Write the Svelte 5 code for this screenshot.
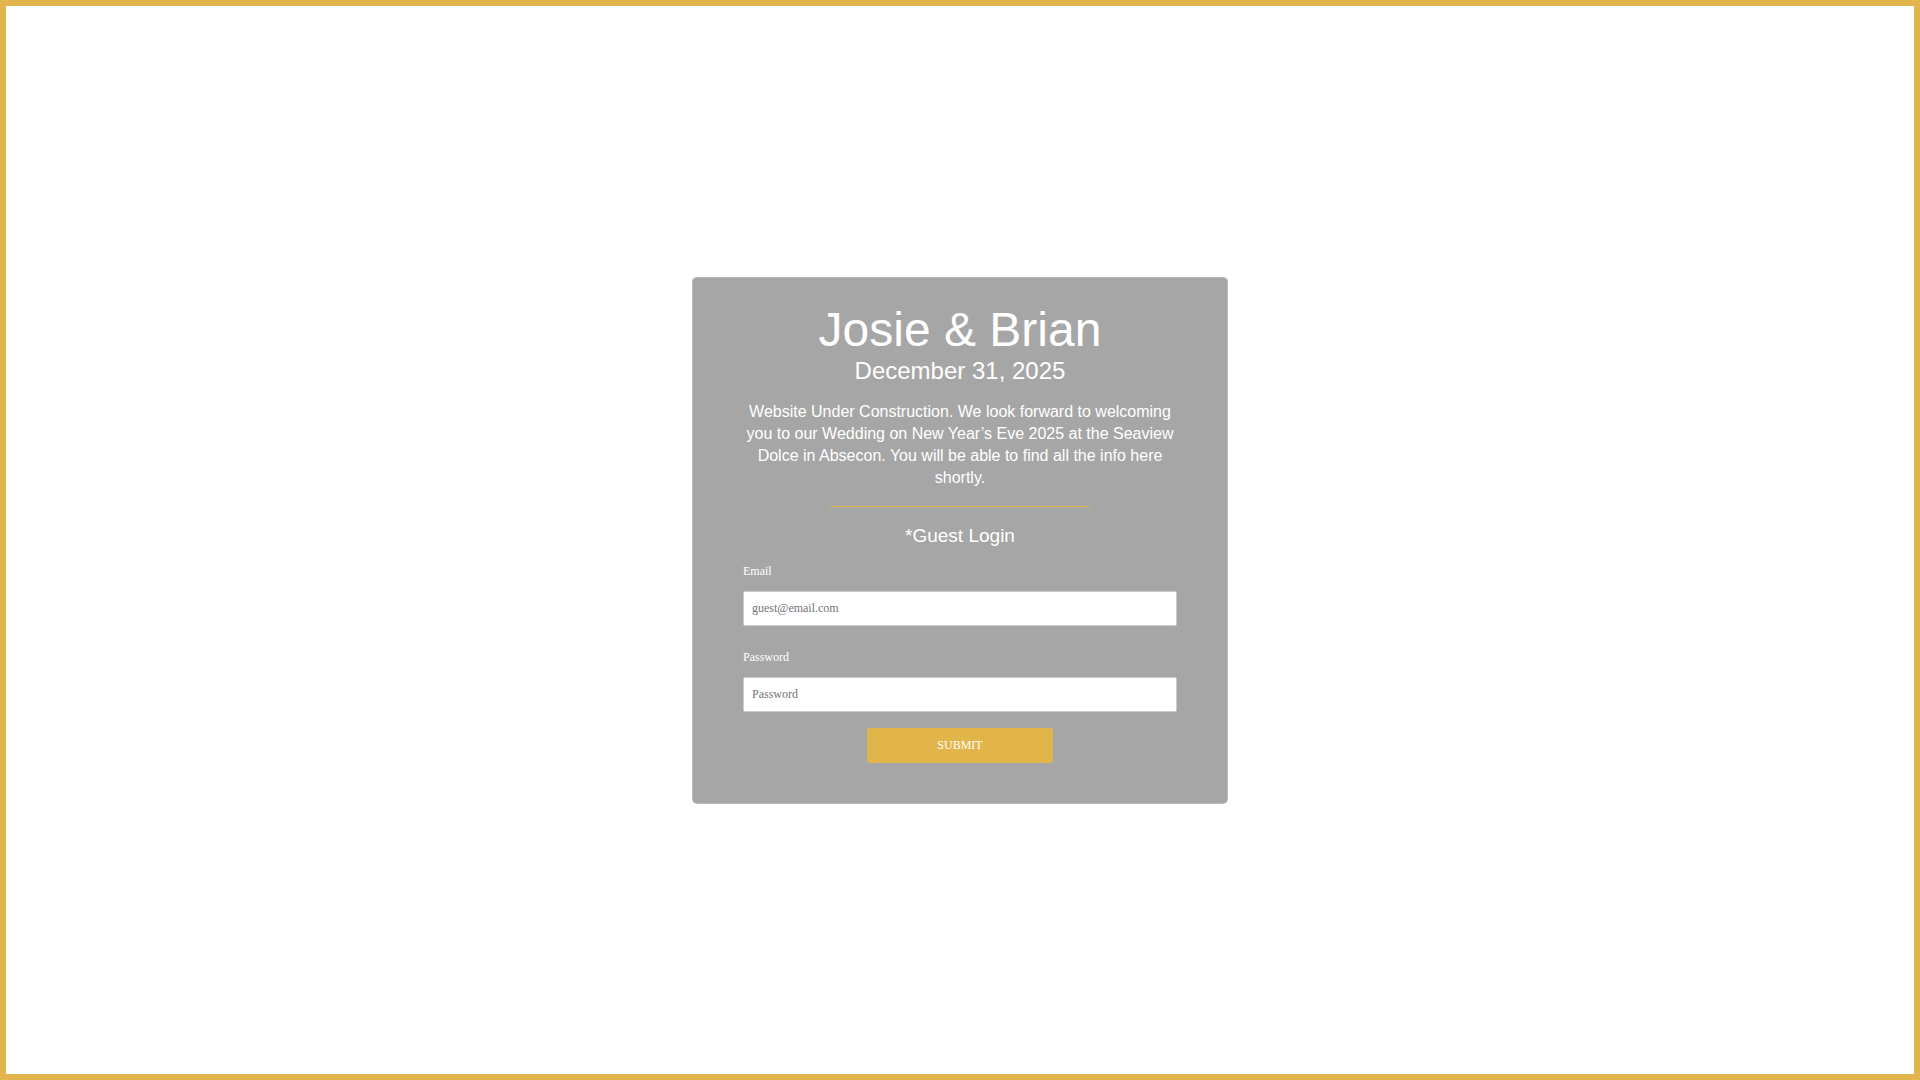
<script>
  let email = $state('')
  let password = $state('')

  function submit(event) {
    event.preventDefault()
  }
</script>

<main class="page">
  <section class="card">
    <h1>Josie &amp; Brian</h1>
    <h2>December 31, 2025</h2>
    <p class="intro">
      Website Under Construction. We look forward to welcoming you to our Wedding on New Year’s Eve 2025 at the Seaview Dolce in Absecon. You will be able to find all the info here shortly.
    </p>
    <hr />
    <h3>*Guest Login</h3>
    <form onsubmit={submit}>
      <div class="field">
        <label for="email">Email</label>
        <input id="email" type="email" placeholder="guest@email.com" bind:value={email} />
      </div>
      <div class="field">
        <label for="password">Password</label>
        <input id="password" type="password" placeholder="Password" bind:value={password} />
      </div>
      <button type="submit">SUBMIT</button>
    </form>
  </section>
</main>

<style>
  .page {
    box-sizing: border-box;
    min-height: 100vh;
    display: flex;
    align-items: center;
    justify-content: center;
    border: 6px solid #e2b54a;
    background: #fff;
    color: #fff;
    font-family: "Liberation Sans", Arial, sans-serif;
    text-align: center;
  }

  .card {
    box-sizing: border-box;
    width: 100%;
    max-width: 536px;
    padding: 25px 50px 40px;
    border: 1px solid rgba(204, 204, 204, 0.5);
    border-radius: 5px;
    background: rgba(0, 0, 0, 0.35);
  }

  h1,
  h2,
  h3 {
    margin: 0;
    font-weight: 400;
  }

  h1 {
    font-size: 48px;
    line-height: 54px;
  }

  h2 {
    font-size: 24px;
    line-height: 28px;
  }

  h3 {
    font-size: 19px;
    line-height: 24px;
  }

  .intro {
    margin: 16px 0;
    font-size: 16px;
    line-height: 22px;
  }

  hr {
    width: 60%;
    height: 1px;
    margin: 17px auto;
    border: 0;
    background: #e2b54a;
  }

  form {
    display: flex;
    flex-direction: column;
    align-items: center;
    gap: 16px;
    margin-top: 16px;
    font-family: "Liberation Serif", "Times New Roman", serif;
    font-size: 12px;
  }

  .field {
    width: 100%;
    display: flex;
    flex-direction: column;
    gap: 12px;
    text-align: left;
  }

  .field + .field {
    margin-top: 8px;
  }

  label {
    line-height: 15px;
  }

  input {
    box-sizing: border-box;
    width: 100%;
    height: 35px;
    padding: 0 8px;
    border: 1px solid #ccc;
    border-radius: 2px;
    background: #fff;
    color: #333;
    font: inherit;
  }

  input::placeholder {
    color: #757575;
  }

  button {
    width: 186px;
    height: 35px;
    padding: 0;
    border: 0;
    border-radius: 3px;
    background: #e2b54a;
    color: #fff;
    font: inherit;
    cursor: pointer;
  }
</style>
